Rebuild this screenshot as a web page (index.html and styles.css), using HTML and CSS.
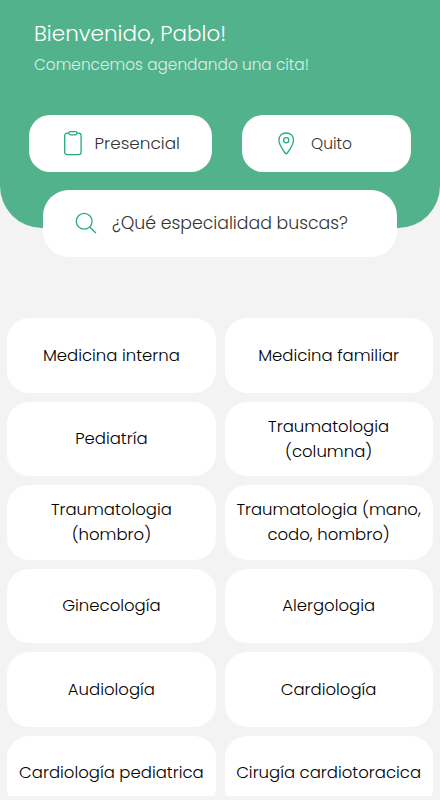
FILE: index.html
```html
<!DOCTYPE html>
<html lang="es">
<head>
  <meta charset="UTF-8">
  <meta name="viewport" content="width=device-width, initial-scale=1.0">
  <title>Agendar cita</title>
  <link rel="stylesheet" href="styles.css">
</head>
<body>
  <header class="header">
    <h1>Bienvenido, Pablo!</h1>
    <p class="subtitle">Comencemos agendando una cita!</p>
    <div class="filters">
      <button class="filter filter-type">
        <svg class="icon" width="20" height="26" viewBox="0 0 20 26">
          <rect x="1.7" y="3.2" width="16.4" height="21.4" rx="2.4"/>
          <rect class="clip" x="5.9" y="1.6" width="8" height="3.2" rx="1.5"/>
        </svg>
        <span>Presencial</span>
      </button>
      <button class="filter filter-city">
        <svg class="icon" width="18" height="26" viewBox="0 0 18 26">
          <path d="M9.2 24C8.2 23.5 1.9 14.8 1.9 10.2C1.9 5.8 4.8 3 9.2 3s7.3 2.800 7.300 7.200C16.500 14.800 10.200 23.500 9.200 24z"/>
          <circle cx="9.2" cy="10.300" r="2.600"/>
        </svg>
        <span>Quito</span>
      </button>
    </div>
  </header>

  <div class="search">
    <svg class="icon" width="22" height="22" viewBox="0 0 22 22">
      <circle cx="9.2" cy="9.3" r="7.9"/>
      <path d="M14.9 15L20.6 20.7"/>
    </svg>
    <span>¿Qué especialidad buscas?</span>
  </div>

  <main class="specialties">
    <div class="card">Medicina interna</div>
    <div class="card">Medicina familiar</div>
    <div class="card">Pediatría</div>
    <div class="card">Traumatologia<br>(columna)</div>
    <div class="card">Traumatologia<br>(hombro)</div>
    <div class="card">Traumatologia (mano,<br>codo, hombro)</div>
    <div class="card">Ginecología</div>
    <div class="card">Alergologia</div>
    <div class="card">Audiología</div>
    <div class="card">Cardiología</div>
    <div class="card">Cardiología pediatrica</div>
    <div class="card">Cirugía cardiotoracica</div>
  </main>
</body>
</html>
```

FILE: styles.css
```css
* {
  box-sizing: border-box;
}
body {
  margin: 0;
  height: 800px;
  overflow: hidden;
  background-color: #f3f3f3;
  font-family: Poppins, Inter, sans-serif;
  font-weight: 300;
  color: #000;
}
.header {
  height: 228px;
  padding: 18px 29px 0;
  background-color: #52b28b;
  border-radius: 0 0 42px 42px;
  color: #fff;
}
h1 {
  margin: 0 5px;
  font-size: 21.5px;
  font-weight: 300;
  line-height: 32px;
}
.subtitle {
  margin: 3px 5px 0;
  font-size: 15.35px;
  line-height: 24px;
  opacity: 0.8;
}
.filters {
  display: flex;
  justify-content: space-between;
  margin-top: 37.5px;
}
.filter {
  display: flex;
  align-items: center;
  height: 57.5px;
  padding: 0;
  border: none;
  border-radius: 21px;
  background-color: #fff;
  font-family: inherit;
  font-size: 16.9px;
  font-weight: 300;
  color: #333;
}
.filter-type {
  width: 182.5px;
  padding-left: 34px;
  gap: 11.5px;
}
.filter-city {
  width: 169px;
  padding-left: 35px;
  gap: 16px;
  font-size: 15.5px;
}
.icon {
  flex: none;
  fill: none;
  stroke: #21ad7b;
  stroke-width: 1.3;
  stroke-linecap: round;
}
.clip {
  fill: #fff;
}
.search {
  display: flex;
  align-items: center;
  gap: 15px;
  position: relative;
  width: 354.5px;
  height: 67px;
  margin: -38.5px 0 0 42.7px;
  padding-left: 32.3px;
  border-radius: 26px;
  background-color: #fff;
  font-size: 17.3px;
  color: #333;
}
.specialties {
  display: grid;
  grid-template-columns: 1fr 1fr;
  grid-auto-rows: 74.5px;
  gap: 9px;
  height: 478px;
  margin-top: 61.5px;
  padding: 0 7.3px;
  overflow: hidden;
}
.card {
  display: flex;
  align-items: center;
  justify-content: center;
  border-radius: 22px;
  background-color: #fff;
  font-size: 16.5px;
  line-height: 25px;
  text-align: center;
  white-space: nowrap;
}
```
